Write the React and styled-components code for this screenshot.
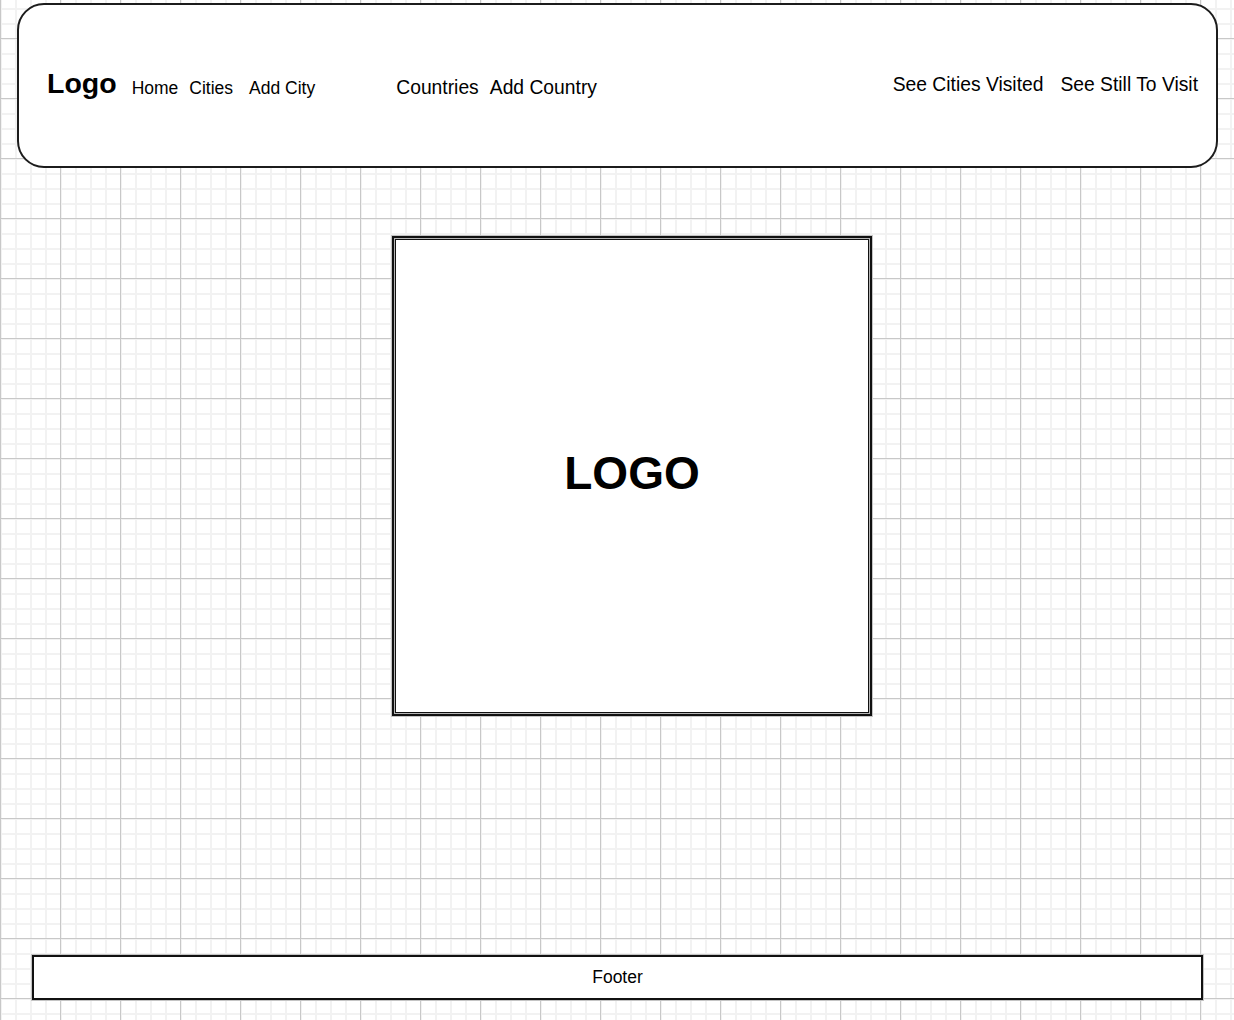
import React from 'react'
import styled, {createGlobalStyle} from 'styled-components'

const GlobalStyle = createGlobalStyle`
  html, body {
    margin: 0;
    padding: 0;
  }
  body {
    min-height: 1020px;
    font-family: "Liberation Sans", Arial, Helvetica, sans-serif;
    color: #000;
    background-color: #fff;
    background-image:
      linear-gradient(to right, #c8c8c8 1px, transparent 1px),
      linear-gradient(to bottom, #c8c8c8 1px, transparent 1px),
      linear-gradient(to right, #f2f2f2 2px, transparent 2px),
      linear-gradient(to bottom, #f2f2f2 2px, transparent 2px);
    background-size: 60px 60px, 60px 60px, 15px 15px, 15px 15px;
    background-position: 0 0, 0 38px, 0 0, 0 8px;
  }
`

export default function App() {
  return (
    <>
      <GlobalStyle />
      <Page>
        <Header>
          <Brand>Logo</Brand>
          <NavLink $size={17.5} $ml={15} $shift={5}>Home</NavLink>
          <NavLink $size={17.5} $ml={11} $shift={5}>Cities</NavLink>
          <NavLink $size={17.5} $ml={16} $shift={5}>Add City</NavLink>
          <NavLink $size={19.3} $ml={81} $shift={4}>Countries</NavLink>
          <NavLink $size={19.3} $ml={11} $shift={4}>Add Country</NavLink>
          <RightNav>
            <NavLink $size={19.3} $shift={-2}>See Cities Visited</NavLink>
            <NavLink $size={19.3} $ml={17} $shift={-2}>See Still To Visit</NavLink>
          </RightNav>
        </Header>

        <Main>
          <LogoBox>
            <BigLogo>LOGO</BigLogo>
          </LogoBox>
        </Main>

        <Footer>Footer</Footer>
      </Page>
    </>
  )
}

const Page = styled.div`
  display: flex;
  flex-direction: column;
  min-height: 1020px;
  box-sizing: border-box;
`
const Header = styled.header`
  box-sizing: border-box;
  display: flex;
  align-items: center;
  width: 1201px;
  height: 165px;
  margin: 3px 0 0 17px;
  padding: 0 18px 0 28px;
  background: #fff;
  border: 2px solid #1c1c1c;
  border-radius: 27px;
`
const Brand = styled.div`
  font-size: 28.5px;
  font-weight: 700;
  margin-bottom: 5px;
`
const NavLink = styled.a`
  font-size: ${p => p.$size}px;
  margin-left: ${p => p.$ml || 0}px;
  margin-top: ${p => (p.$shift > 0 ? p.$shift : 0)}px;
  margin-bottom: ${p => (p.$shift < 0 ? -p.$shift : 0)}px;
  color: #000;
  text-decoration: none;
  white-space: nowrap;
  cursor: pointer;
`
const RightNav = styled.nav`
  display: flex;
  align-items: center;
  margin-left: auto;
`
const Main = styled.main`
  display: flex;
  padding: 68px 0 0 392px;
`
const LogoBox = styled.div`
  box-sizing: border-box;
  display: flex;
  align-items: center;
  justify-content: center;
  width: 480px;
  height: 480px;
  background: #fff;
  border: 2px solid #111;
  box-shadow: inset 0 0 0 1px #b5b5b5, inset 0 0 0 2px #111, 0 0 0 1px #c4c4c4;
`
const BigLogo = styled.h1`
  margin: 0 0 6px;
  font-size: 46px;
  font-weight: 700;
`
const Footer = styled.footer`
  box-sizing: border-box;
  display: flex;
  align-items: center;
  justify-content: center;
  width: 1171px;
  height: 45px;
  margin: auto 0 20px 32px;
  background: #fff;
  border: 2px solid #111;
  box-shadow: 0 0 0 1px #c4c4c4;
  font-size: 17.5px;
`
